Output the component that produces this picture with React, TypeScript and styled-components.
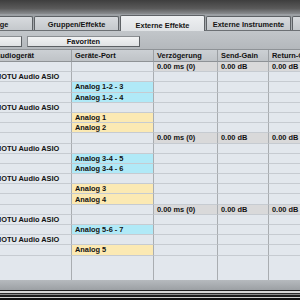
import styled, { createGlobalStyle } from "styled-components";

const GlobalStyle = createGlobalStyle`
  html, body {
    margin: 0;
    padding: 0;
    width: 300px;
    height: 300px;
    overflow: hidden;
    background: #c0c4c8;
  }
  body {
    font-family: "Liberation Sans", Arial, sans-serif;
    font-size: 7.4px;
    font-weight: bold;
    color: #111;
  }
`;

const Window = styled.div`
  width: 300px;
  height: 300px;
  display: flex;
  flex-direction: column;
  overflow: hidden;
`;

const TitleStrip = styled.div`
  height: 14px;
  flex-shrink: 0;
  background: linear-gradient(#3e3e3e, #5a5a5a 60%, #8a8d90);
`;

const TabBar = styled.div`
  height: 17px;
  flex-shrink: 0;
  display: flex;
  align-items: flex-end;
  gap: 1px;
  margin-left: -52px;
  background: linear-gradient(#9a9ea2, #aeb2b6);
  border-bottom: 1px solid #6c7074;
  box-sizing: border-box;
`;

const Tab = styled.div<{ $active?: boolean }>`
  width: 85px;
  flex-shrink: 0;
  height: ${({ $active }) => ($active ? "16px" : "14px")};
  box-sizing: border-box;
  display: flex;
  align-items: center;
  justify-content: center;
  padding-top: ${({ $active }) => ($active ? "3px" : "2px")};
  border: 1px solid #5e6266;
  border-bottom: none;
  border-radius: 2px 2px 0 0;
  margin-bottom: ${({ $active }) => ($active ? "-1px" : "0")};
  background: ${({ $active }) =>
    $active
      ? "linear-gradient(#eef0f2, #dfe2e5)"
      : "linear-gradient(#d8dbde, #c4c8cc)"};
  color: #141414;
`;

const Toolbar = styled.div`
  height: 19px;
  flex-shrink: 0;
  box-sizing: border-box;
  display: flex;
  align-items: flex-start;
  gap: 5px;
  padding-top: 5px;
  margin-left: -60px;
  background: linear-gradient(#c2c6ca, #b4b8bc);
  border-bottom: 1px solid #8e9296;
`;

const Button = styled.div<{ $w: number }>`
  width: ${({ $w }) => $w}px;
  height: 11px;
  box-sizing: border-box;
  display: flex;
  align-items: center;
  justify-content: center;
  border: 1px solid #5c6064;
  border-top-color: #8a8e92;
  border-left-color: #8a8e92;
  background: linear-gradient(#f2f3f4, #e0e2e4);
`;

const Table = styled.div`
  flex: 1;
  display: grid;
  grid-template-columns: 80px 82px 64px 51px 70px;
  grid-template-rows: 12px;
  grid-auto-rows: 10.2px;
  margin-left: -8px;
  background: #e2e7ed;
  min-height: 0;
`;

const HeadCell = styled.div`
  box-sizing: border-box;
  padding: 0 3px;
  display: flex;
  align-items: center;
  white-space: nowrap;
  overflow: hidden;
  background: linear-gradient(#ccd0d4, #bfc3c7);
  border-right: 1px solid #9a9ea2;
  border-bottom: 1px solid #8e9296;
`;

type Tone = "plain" | "cyan" | "yellow" | "value";

const toneColor: Record<Tone, string> = {
  plain: "#e2e7ed",
  cyan: "#b0e9f7",
  yellow: "#fbe9b3",
  value: "#d9d9da",
};

const Cell = styled.div<{ $tone: Tone }>`
  box-sizing: border-box;
  padding: 0 3px;
  display: flex;
  align-items: center;
  white-space: nowrap;
  overflow: hidden;
  background: ${({ $tone }) => toneColor[$tone]};
  border-right: 1px solid #a9adb1;
  border-bottom: 1px solid #c6cbd1;
`;

const Filler = styled.div`
  grid-column: 1 / -1;
  display: grid;
  grid-template-columns: 80px 82px 64px 51px 70px;
  height: 40px;
`;

const FillerCol = styled.div`
  border-right: 1px solid #a9adb1;
`;

const Footer = styled.div`
  height: 20px;
  flex-shrink: 0;
  background:
    linear-gradient(#b6babe, #9ca0a4) top / 100% 10px no-repeat,
    linear-gradient(
      #1e1e1e 0 1px,
      #d8d8d8 1px 3px,
      #2a2a2a 3px 4px,
      #8a8a8a 4px 5px,
      #1c1c1c 5px 7px,
      #cfcfcf 7px 8px,
      #111 8px 10px
    ) bottom / 100% 10px no-repeat;
`;

type Row = { dev?: string; port?: string; tone?: Tone; values?: boolean };

const rows: Row[] = [
  { values: true },
  { dev: "MOTU Audio ASIO" },
  { port: "Analog 1-2 - 3", tone: "cyan" },
  { port: "Analog 1-2 - 4", tone: "cyan" },
  { dev: "MOTU Audio ASIO" },
  { port: "Analog 1", tone: "yellow" },
  { port: "Analog 2", tone: "yellow" },
  { values: true },
  { dev: "MOTU Audio ASIO" },
  { port: "Analog 3-4 - 5", tone: "cyan" },
  { port: "Analog 3-4 - 6", tone: "cyan" },
  { dev: "MOTU Audio ASIO" },
  { port: "Analog 3", tone: "yellow" },
  { port: "Analog 4", tone: "yellow" },
  { values: true },
  { dev: "MOTU Audio ASIO" },
  { port: "Analog 5-6 - 7", tone: "cyan" },
  { dev: "MOTU Audio ASIO" },
  { port: "Analog 5", tone: "yellow" },
];

const headers = ["Audiogerät", "Geräte-Port", "Verzögerung", "Send-Gain", "Return-Gain"];

const App = () => {
  return (
    <>
      <GlobalStyle />
      <Window>
        <TitleStrip />
        <TabBar>
          <Tab>Ausgänge</Tab>
          <Tab>Gruppen/Effekte</Tab>
          <Tab $active>Externe Effekte</Tab>
          <Tab>Externe Instrumente</Tab>
          <Tab>Studio</Tab>
        </TabBar>
        <Toolbar>
          <Button $w={82}>Externen Effekt hinzufügen</Button>
          <Button $w={113}>Favoriten</Button>
        </Toolbar>
        <Table>
          {headers.map((h) => (
            <HeadCell key={h}>{h}</HeadCell>
          ))}
          {rows.map((r, i) => {
            const side: Tone = r.values ? "value" : "plain";
            return [
              <Cell key={i + "a"} $tone="plain">{r.dev}</Cell>,
              <Cell key={i + "b"} $tone={r.tone ?? "plain"}>{r.port}</Cell>,
              <Cell key={i + "c"} $tone={side}>{r.values && "0.00 ms (0)"}</Cell>,
              <Cell key={i + "d"} $tone={side}>{r.values && "0.00 dB"}</Cell>,
              <Cell key={i + "e"} $tone={side}>{r.values && "0.00 dB"}</Cell>,
            ];
          })}
          <Filler>
            <FillerCol />
            <FillerCol />
            <FillerCol />
            <FillerCol />
            <FillerCol />
          </Filler>
        </Table>
        <Footer />
      </Window>
    </>
  );
};

export default App;
